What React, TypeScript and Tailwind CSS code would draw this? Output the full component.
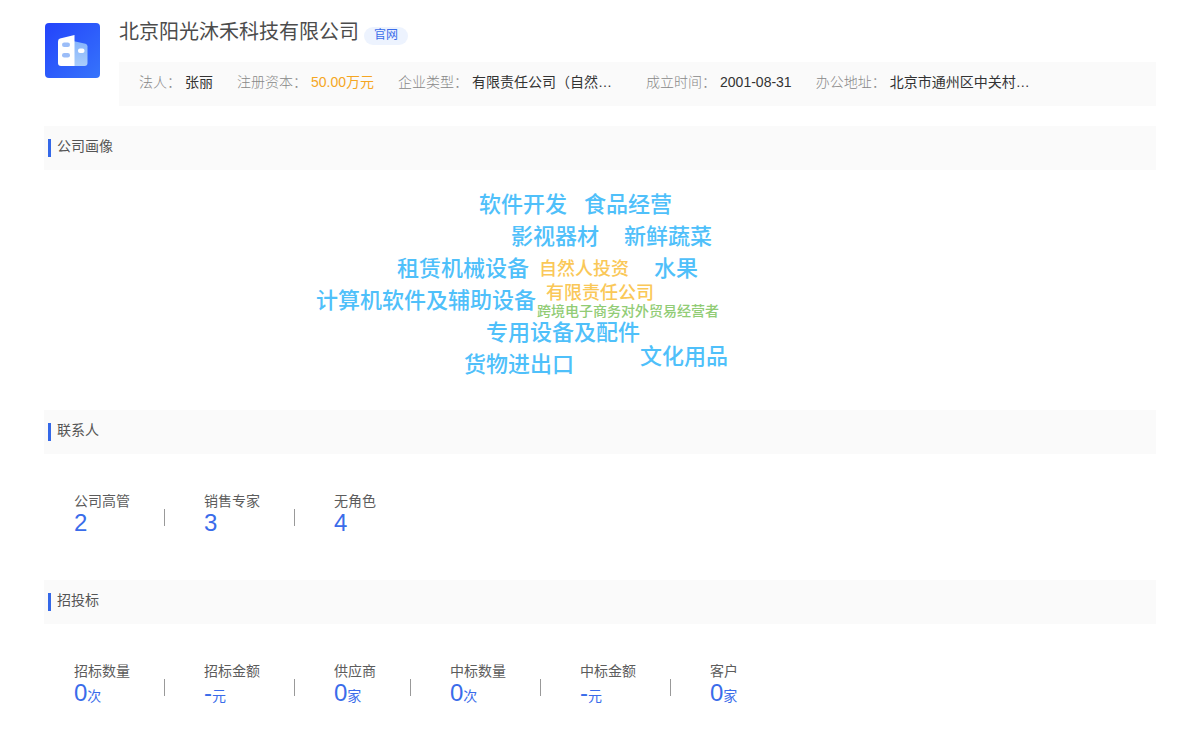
import { Fragment, type ReactNode } from "react";

const companyInfo = [
  { label: "法人", value: "张丽" },
  { label: "注册资本", value: "50.00万元", className: "text-[#f5a623]" },
  {
    label: "企业类型",
    value: "有限责任公司（自然…",
    className: "w-[150px] text-[#333333]",
  },
  { label: "成立时间", value: "2001-08-31" },
  { label: "办公地址", value: "北京市通州区中关村…" },
];

const tagStyles = {
  business: "text-[22px] text-[#4fc0fa]",
  type: "text-[18px] text-[#fac858]",
  extra: "text-[14px] text-[#91cc75]",
};

// x / y are offsets inside the word cloud canvas
const tags: { text: string; kind: keyof typeof tagStyles; x: number; y: number }[] = [
  { text: "软件开发", kind: "business", x: 163, y: 24 },
  { text: "食品经营", kind: "business", x: 268, y: 24 },
  { text: "影视器材", kind: "business", x: 195, y: 56 },
  { text: "新鲜蔬菜", kind: "business", x: 308, y: 56 },
  { text: "租赁机械设备", kind: "business", x: 81, y: 88 },
  { text: "自然人投资", kind: "type", x: 223, y: 90 },
  { text: "水果", kind: "business", x: 338, y: 88 },
  { text: "计算机软件及辅助设备", kind: "business", x: 0, y: 120 },
  { text: "有限责任公司", kind: "type", x: 230, y: 114 },
  { text: "跨境电子商务对外贸易经营者", kind: "extra", x: 221, y: 134 },
  { text: "专用设备及配件", kind: "business", x: 170, y: 152 },
  { text: "文化用品", kind: "business", x: 324, y: 176 },
  { text: "货物进出口", kind: "business", x: 148, y: 184 },
];

const contacts = [
  { label: "公司高管", value: "2" },
  { label: "销售专家", value: "3" },
  { label: "无角色", value: "4" },
];

const bids = [
  { label: "招标数量", value: "0", unit: "次" },
  { label: "招标金额", value: "-", unit: "元" },
  { label: "供应商", value: "0", unit: "家" },
  { label: "中标数量", value: "0", unit: "次" },
  { label: "中标金额", value: "-", unit: "元" },
  { label: "客户", value: "0", unit: "家" },
];

function CompanyLogo() {
  return (
    <svg viewBox="0 0 55 55" className="mt-px ml-px h-[55px] w-[55px] shrink-0" aria-hidden="true">
      <defs>
        <linearGradient id="logo-bg" x1="0" y1="0" x2="1" y2="1">
          <stop offset="0" stopColor="#2343fb" />
          <stop offset="1" stopColor="#3674fb" />
        </linearGradient>
        <linearGradient id="logo-side" x1="0" y1="0" x2="0" y2="1">
          <stop offset="0" stopColor="#86b4fb" />
          <stop offset="1" stopColor="#a9cdfb" />
        </linearGradient>
      </defs>
      <rect width="55" height="55" rx="4" fill="url(#logo-bg)" />
      <path d="M28 18l12.500 2.800q2 .6 2 2.600v16.600q0 3-3 3H28z" fill="url(#logo-side)" />
      <path d="M29.500 12v31H16q-3 0-3-3V18.500q0-2.200 2-2.900z" fill="#ffffff" />
      <rect x="17" y="19.500" width="8" height="4.500" rx="2.200" fill="#9bbdf8" />
      <rect x="17" y="30" width="8" height="4.500" rx="2.200" fill="#9bbdf8" />
      <rect x="33" y="25.500" width="6.500" height="4.500" rx="2" fill="#ffffff" />
    </svg>
  );
}

function Section({ title, children }: { title: string; children: ReactNode }) {
  return (
    <section>
      <div className="flex h-11 items-center gap-1.5 bg-[#fafafa] pl-1">
        <span className="h-[18px] w-[3px] bg-[#3468e8]" />
        <h2 className="pb-1 text-sm text-[#555555]">{title}</h2>
      </div>
      {children}
    </section>
  );
}

function Stats({ items }: { items: { label: string; value: string; unit?: string }[] }) {
  return (
    <div className="flex h-[126px] items-start pt-9 pl-[30px]">
      {items.map((item, index) => (
        <Fragment key={item.label}>
          {index > 0 && <span className="mt-[19px] mr-[39px] ml-[34px] h-[17px] w-px bg-[#999999]" />}
          <dl>
            <dt className="text-sm leading-[22px] text-[#5c5c5c]">{item.label}</dt>
            <dd className="text-2xl leading-[22px] text-[#3a6cea]">
              {item.value}
              {item.unit && <span className="text-sm leading-none">{item.unit}</span>}
            </dd>
          </dl>
        </Fragment>
      ))}
    </div>
  );
}

export default function App() {
  return (
    <main className="bg-white px-11 pt-[18px] font-['Liberation_Sans','Noto_Sans_CJK_SC',sans-serif]">
      <header className="mb-5 flex gap-[19px] pt-1">
        <CompanyLogo />
        <div className="-mt-1 min-w-0 flex-1">
          <div className="mb-4 flex h-7 items-center gap-[5px]">
            <h1 className="text-xl leading-7 text-[#4c4c4c]">北京阳光沐禾科技有限公司</h1>
            <a
              href="#"
              className="mt-2 h-[18px] rounded-full bg-[#edf3fe] px-2.5 text-xs leading-4 text-[#3a6cea]"
            >
              官网
            </a>
          </div>
          <dl className="flex min-h-11 flex-wrap items-center gap-x-6 bg-[#fafafa] px-5 pb-1 text-sm">
            {companyInfo.map((item) => (
              <div key={item.label} className="flex gap-1">
                <dt className="font-light text-[#888888]">{item.label}：</dt>
                <dd className={item.className ?? "text-[#333333]"}>{item.value}</dd>
              </div>
            ))}
          </dl>
        </div>
      </header>

      <Section title="公司画像">
        <div className="h-60">
          <div className="relative mx-auto w-[568px]">
            {tags.map((tag) => (
              <span
                key={tag.text}
                className={`absolute leading-none font-medium whitespace-nowrap ${tagStyles[tag.kind]}`}
                style={{ left: tag.x, top: tag.y }}
              >
                {tag.text}
              </span>
            ))}
          </div>
        </div>
      </Section>

      <Section title="联系人">
        <Stats items={contacts} />
      </Section>

      <Section title="招投标">
        <Stats items={bids} />
      </Section>
    </main>
  );
}
